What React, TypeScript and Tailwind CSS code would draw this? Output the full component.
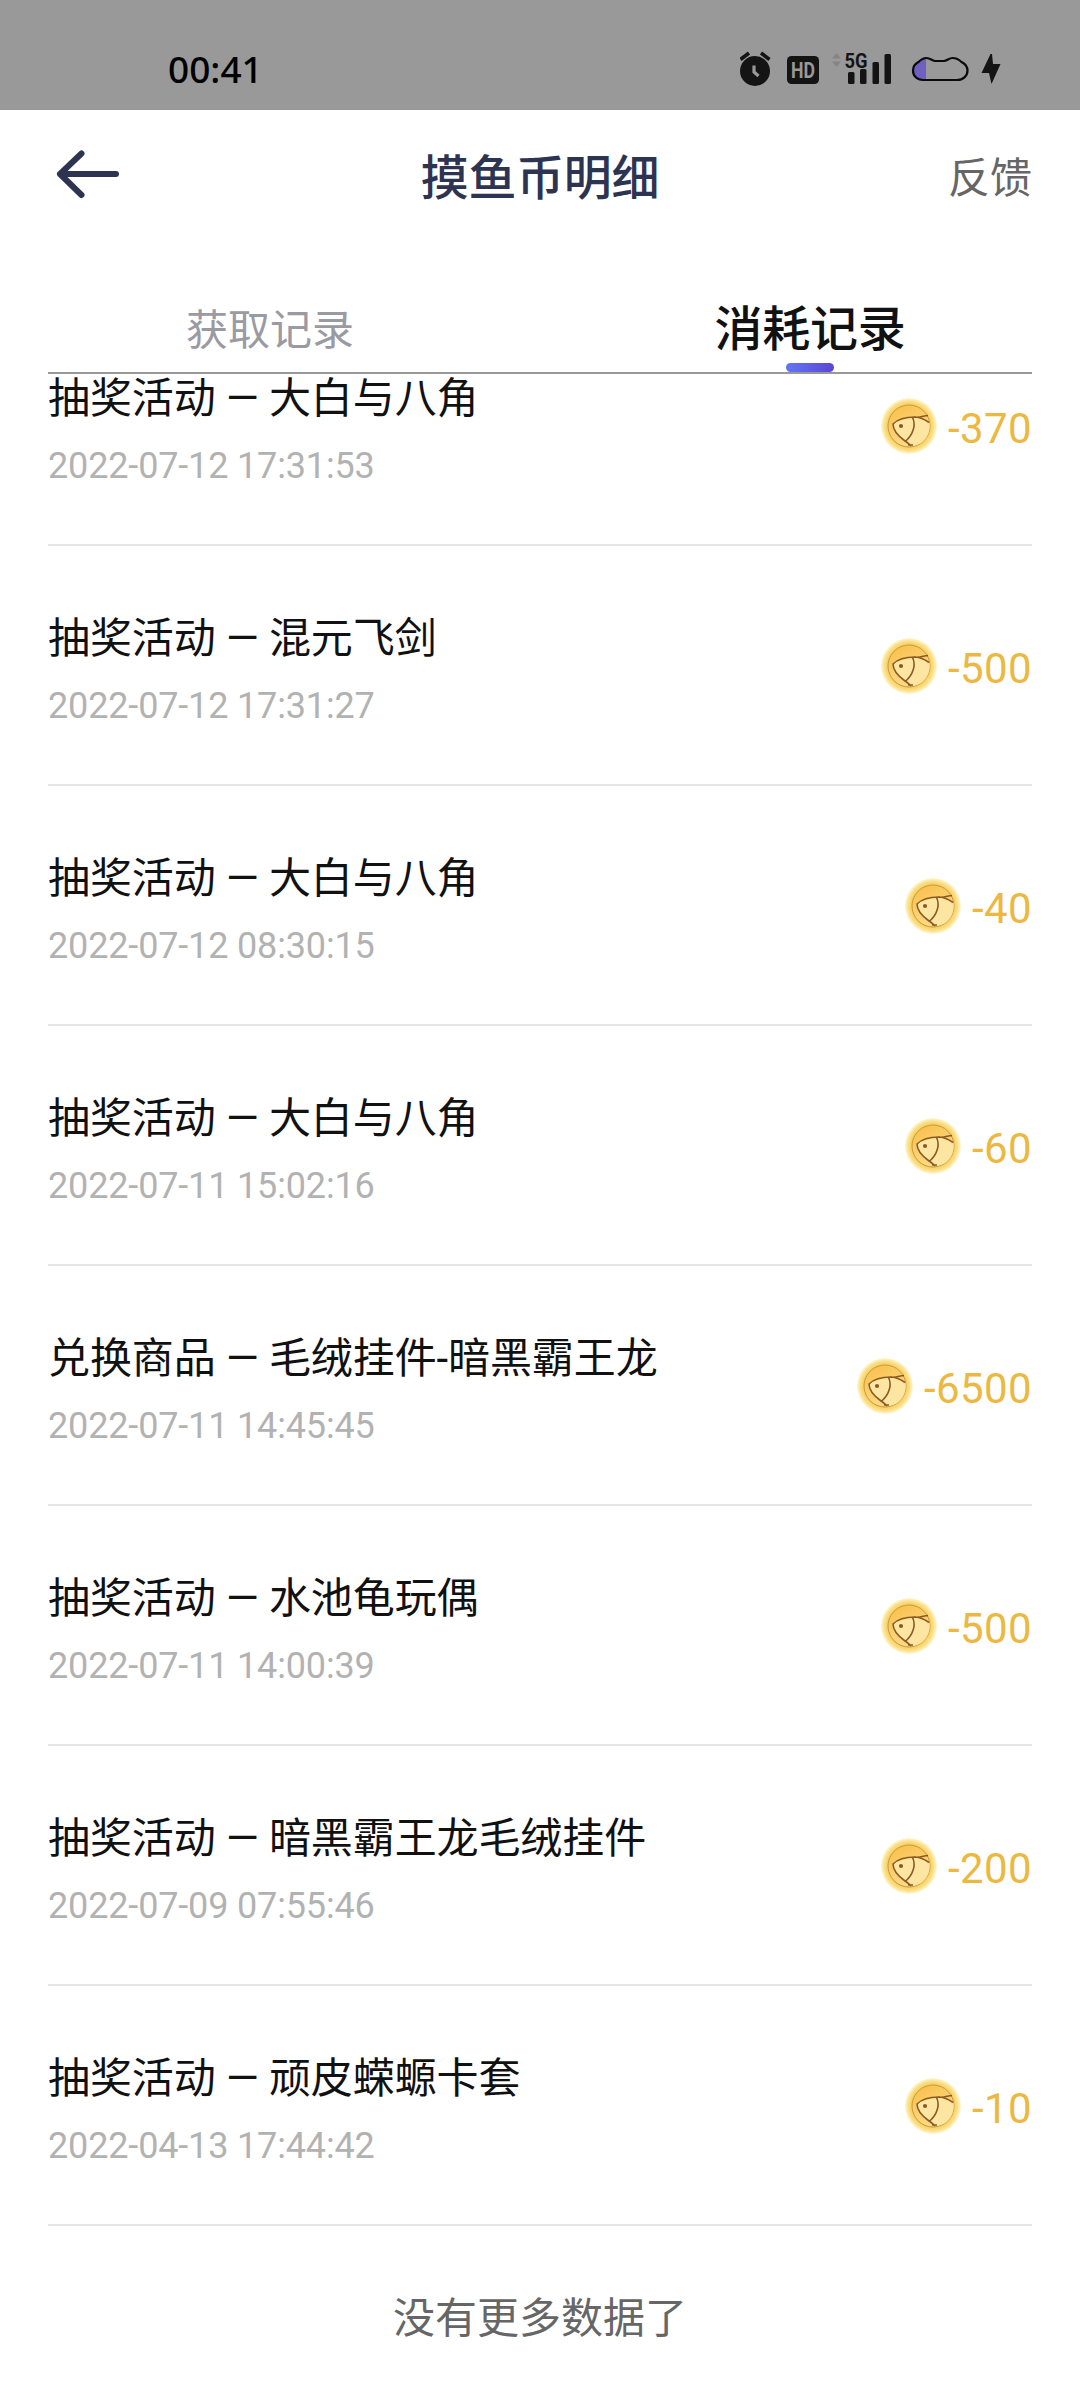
type CoinRecord = {
    title: string;
    time: string;
    amount: number;
};

const records: CoinRecord[] = [
    {title: "抽奖活动 — 大白与八角", time: "2022-07-12 17:31:53", amount: -370},
    {title: "抽奖活动 — 混元飞剑", time: "2022-07-12 17:31:27", amount: -500},
    {title: "抽奖活动 — 大白与八角", time: "2022-07-12 08:30:15", amount: -40},
    {title: "抽奖活动 — 大白与八角", time: "2022-07-11 15:02:16", amount: -60},
    {title: "兑换商品 — 毛绒挂件-暗黑霸王龙", time: "2022-07-11 14:45:45", amount: -6500},
    {title: "抽奖活动 — 水池龟玩偶", time: "2022-07-11 14:00:39", amount: -500},
    {title: "抽奖活动 — 暗黑霸王龙毛绒挂件", time: "2022-07-09 07:55:46", amount: -200},
    {title: "抽奖活动 — 顽皮蝾螈卡套", time: "2022-04-13 17:44:42", amount: -10},
];

function StatusIcons() {
    return (
        <svg width="270" height="50" viewBox="0 0 270 50" fill="none">
            {/* alarm */}
            <circle cx="15" cy="26" r="15" fill="#141414"/>
            <path d="M0.500 14.500L9 8M29.500 14.500L21 8" stroke="#141414" strokeWidth="3.6"/>
            <path d="M14 20.500v6.500l4.500 4" stroke="#999" strokeWidth="3.2"/>
            {/* HD */}
            <rect x="47" y="11" width="32" height="28" rx="4.5" fill="#141414"/>
            <text x="63" y="33" textAnchor="middle" textLength="24" lengthAdjust="spacingAndGlyphs" fill="#999"
                  className="font-['Roboto',sans-serif] text-[22.5px] font-bold">HD</text>
            {/* signal */}
            <path d="M92 13.500l4.500-5.500 4.500 5.500zM92 16.500l4.500 5.500 4.500-5.500z" fill="#858585"/>
            <text x="104.500" y="22.500" textLength="23" lengthAdjust="spacingAndGlyphs" fill="#141414"
                  className="font-['Roboto',sans-serif] text-[21px] font-bold">5G</text>
            <rect x="108" y="27" width="6.500" height="12" rx="1.500" fill="#141414"/>
            <rect x="120" y="24" width="6.500" height="15" rx="1.500" fill="#141414"/>
            <rect x="132.500" y="17" width="6.500" height="22" rx="1.500" fill="#141414"/>
            <rect x="144.500" y="9" width="6.500" height="30" rx="1.500" fill="#141414"/>
            {/* battery */}
            <path d="M186 13c-3 0-5 2-7 4-4 2-6 5-6 8 0 6 4 10 10 10h3z" fill="#6e5fc0"/>
            <path d="M183 35h34c6 0 10.500-4 10.500-9.500 0-4-2-6.500-6-8.500-3-3-6-4-9-4-4 0-5 3-9 3h-8c-3 0-5-3-9-3-3 0-5 1-8 4-4 2-5.500 5-5.500 8.500 0 5.500 4 9.500 10 9.500z"
                  stroke="#0a0a0a" strokeWidth="2.200"/>
            {/* charging */}
            <path d="M250.500 9L241.500 28h7.500l2.500 11 9-20h-7.500l-1-10z" fill="#141414"/>
        </svg>
    );
}

function BackArrow() {
    return (
        <svg width="64" height="50" viewBox="0 0 64 50" fill="none" stroke="#2d3452" strokeWidth="6"
             strokeLinecap="round" strokeLinejoin="round">
            <path d="M61 24H5M26.500 3.500L5 24l21.500 21"/>
        </svg>
    );
}

function FishCoin() {
    return (
        <svg width="60" height="60" viewBox="0 0 60 60" fill="none">
            <defs>
                <radialGradient id="rim">
                    <stop offset="0.75" stopColor="#f8cd62"/>
                    <stop offset="0.88" stopColor="#fbe084"/>
                    <stop offset="1" stopColor="#fff8dc"/>
                </radialGradient>
                <linearGradient id="face" x1="0.2" y1="0" x2="0.7" y2="1">
                    <stop stopColor="#f9c04c"/>
                    <stop offset="1" stopColor="#fddf92"/>
                </linearGradient>
            </defs>
            <circle cx="30" cy="30" r="28" fill="url(#rim)"/>
            <circle cx="30" cy="30" r="21" fill="url(#face)" stroke="#c99b3c" strokeWidth="1"/>
            <path d="M14 28c5-5 14-7 22-7 6 1 11 3 14.500 6 1.500 12-6 22-17.500 23-3-3-5-4-7-5-7-5-12-11-12-17z" fill="#fde5a2"/>
            <path d="M50 26.500c-4-3-9-5-14-5.500-8 0-17 2-22 7 0 6 5 12 12 17 2 1 4 3 6 5M33.500 21.500c4 8 0 18-7.500 24M36 21c5 1 9-1.500 13-1.500M29 49h5"
                  stroke="#8a5a22" strokeWidth="1.600"/>
            <circle cx="22" cy="30" r="2.100" fill="#8a5a22"/>
        </svg>
    );
}

function RecordRow({record}: {record: CoinRecord}) {
    return (
        <li className="flex h-[240px] items-center justify-between border-b-2 border-[#e5e5e5]">
            <div className="flex flex-col pt-[15px]">
                <span className="text-[42px] leading-[46px] tracking-[-0.1px] text-[#111]">{record.title}</span>
                <span className="mt-5 text-[36px] leading-[48px] tracking-[-0.15px] text-[#b2b2b2]">{record.time}</span>
            </div>
            <div className="flex items-center gap-[9px] pt-[2px]">
                <FishCoin/>
                <span className="pt-[5px] text-[42px] leading-[56px] tracking-[0.4px] text-[#edb842]">{record.amount}</span>
            </div>
        </li>
    );
}

export default function App() {
    return (
        <div className="flex h-[2400px] w-[1080px] flex-col overflow-hidden bg-white font-['Roboto','Noto_Sans_CJK_SC',sans-serif]">
            <div className="flex h-[110px] shrink-0 items-end justify-between bg-[#999] pr-[70px] pb-[15px] pl-[168px]">
                <span className="pb-px font-['Noto_Sans',sans-serif] text-[37px] leading-[50px] font-medium text-black">00:41</span>
                <StatusIcons/>
            </div>

            <header className="grid h-[130px] shrink-0 grid-cols-3 items-center px-12">
                <div className="pl-[7px]"><BackArrow/></div>
                <h1 className="pt-[7px] text-center text-[48px] font-medium tracking-[-0.3px] text-[#2d3452]">摸鱼币明细</h1>
                <span className="pt-[6px] text-right text-[42px] text-[#666]">反馈</span>
            </header>

            <div className="mx-12 mt-[44px] flex h-[90px] shrink-0 border-b-2 border-[#999]">
                <div className="flex flex-1 justify-center pt-[3px] pr-[48px] text-[42px] leading-[88px] text-[#9a9aa2]">获取记录</div>
                <div className="flex flex-1 flex-col items-center pt-[13px] pl-[48px] text-[48px] leading-[66px] font-medium tracking-[-0.2px] text-[#111]">
                    消耗记录
                    <div className="h-[9px] w-12 rounded-full bg-gradient-to-r from-[#6076f2] to-[#5b45d6]"/>
                </div>
            </div>

            {/* list is scrolled, the first row starts under the tabs */}
            <div className="flex-1 px-12">
                <ul className="-mt-[68px]">
                    {records.map((record) => (
                        <RecordRow key={record.time} record={record}/>
                    ))}
                </ul>
                <p className="pt-[65px] text-center text-[42px] leading-[56px] text-[#666]">没有更多数据了</p>
            </div>
        </div>
    );
}
